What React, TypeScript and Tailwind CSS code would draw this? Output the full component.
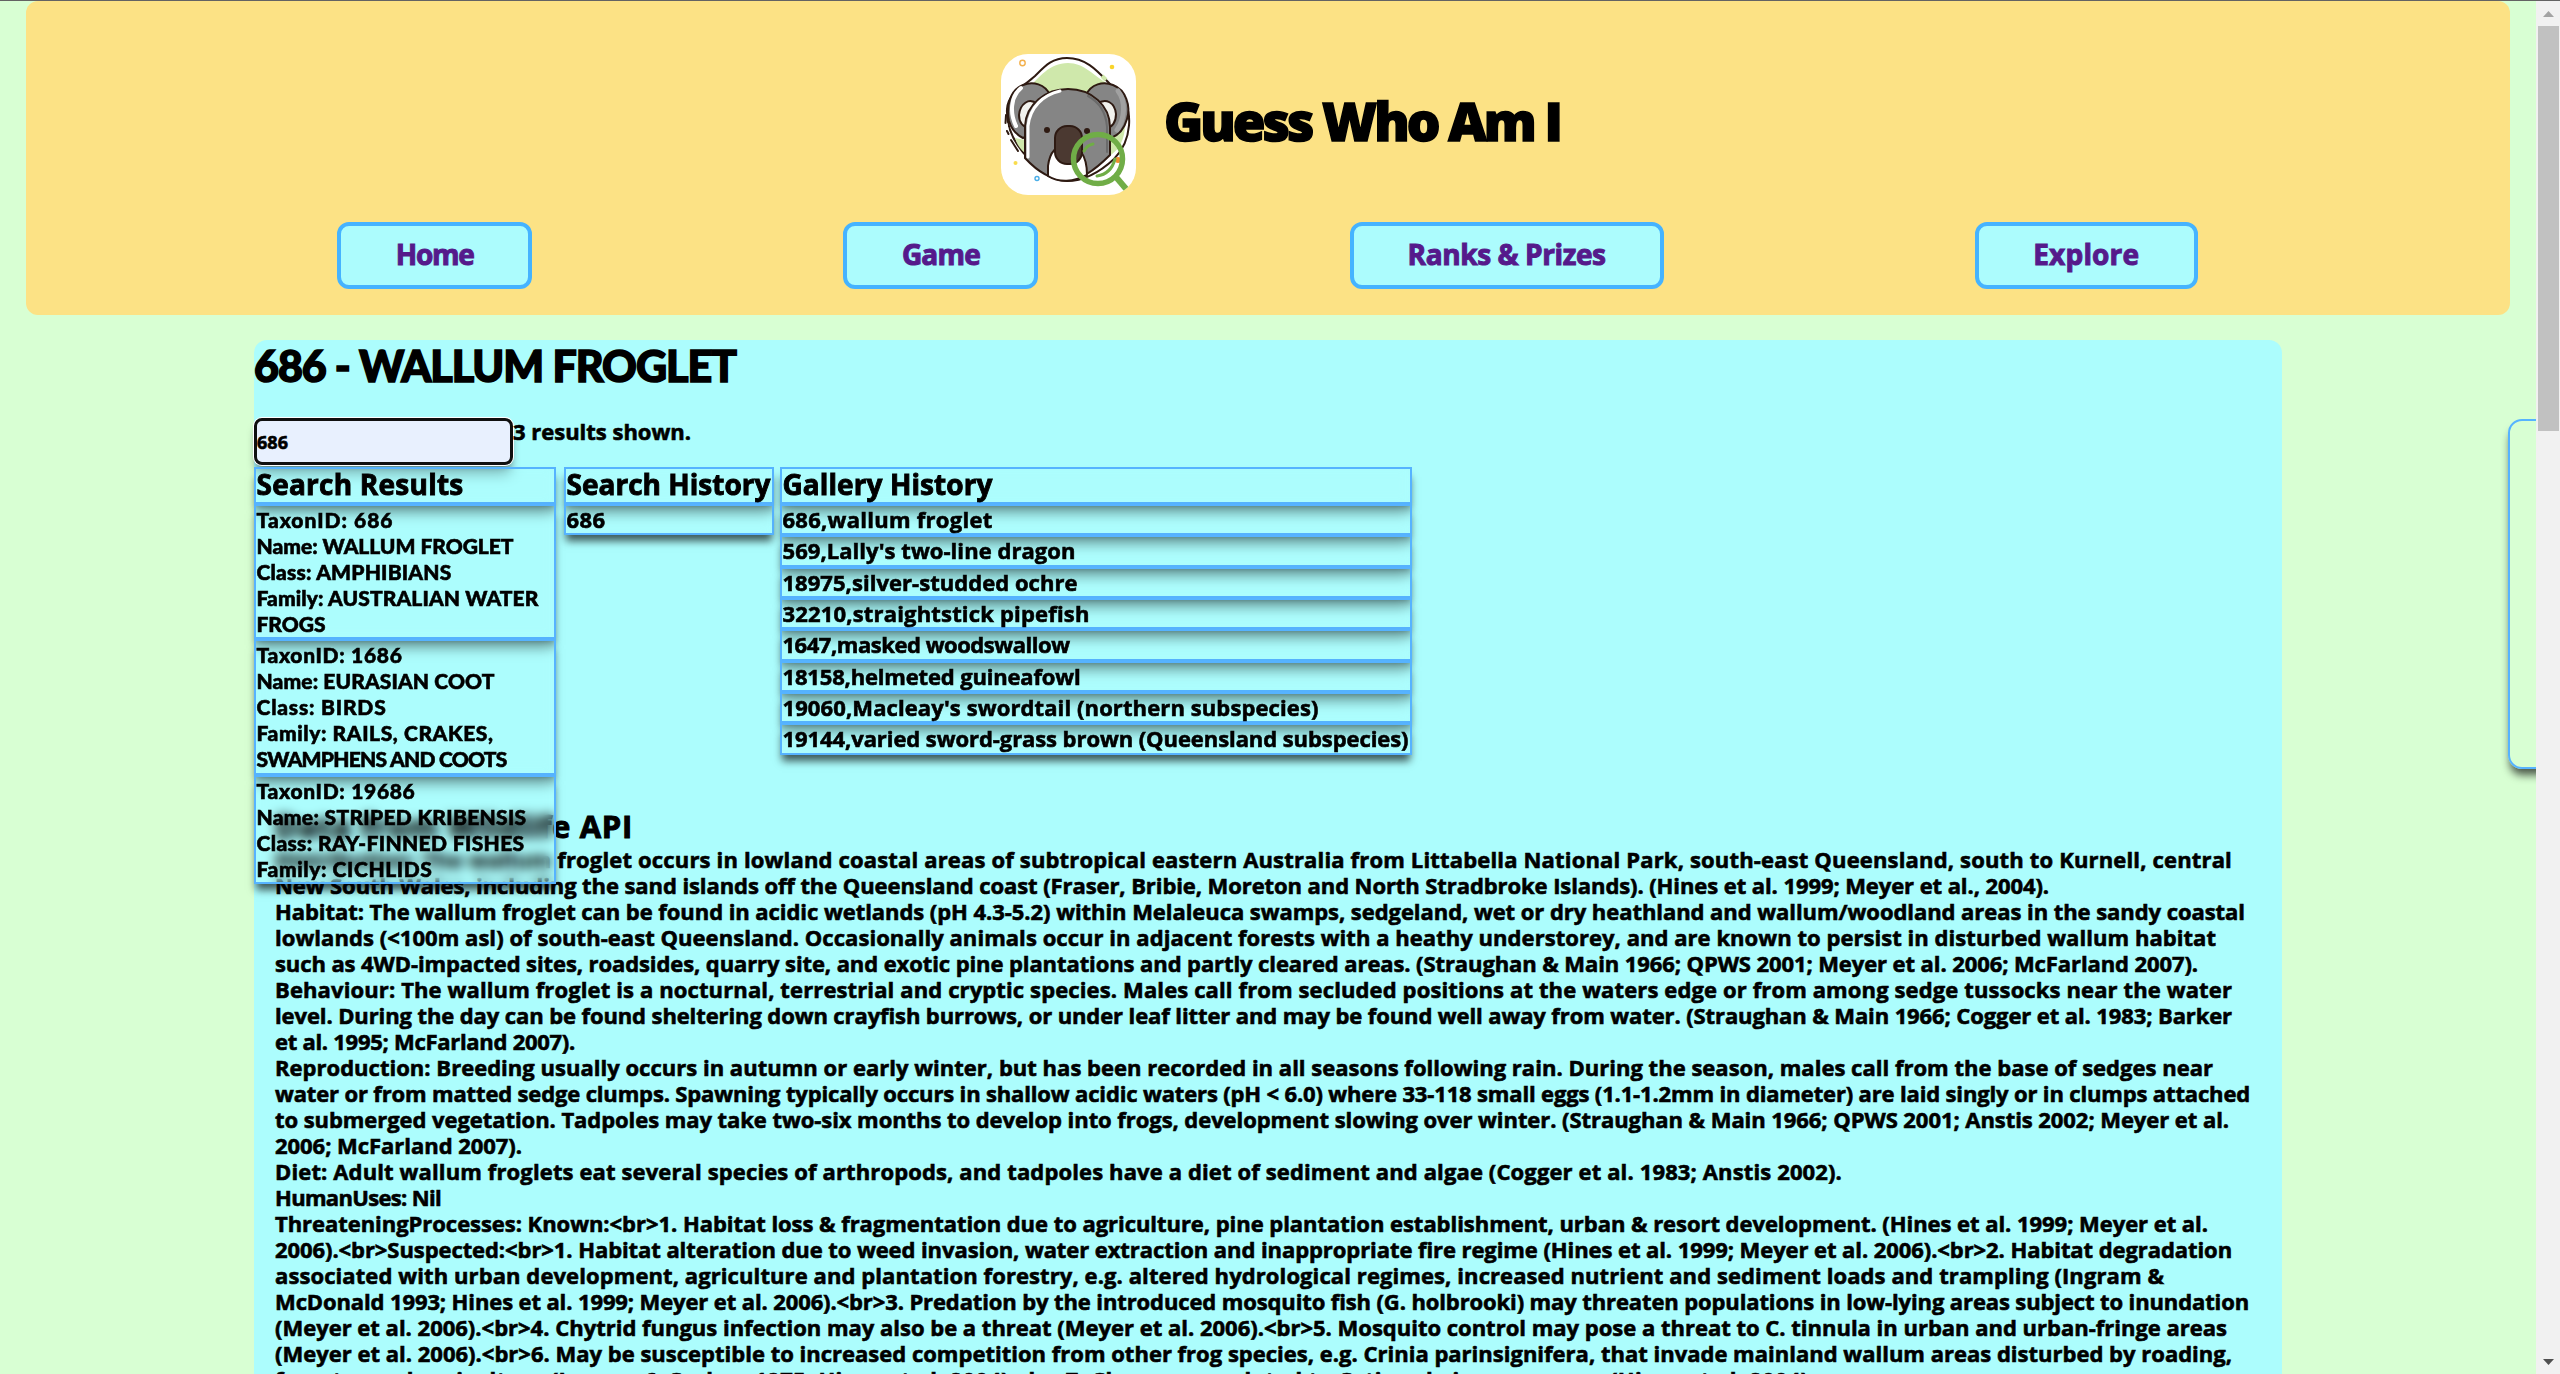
import { useLayoutEffect, useRef, useState } from "react";

/** Single line of text whose tracking is adjusted to fill the given width. */
function Line({ text, w }: { text: string; w: number }) {
  const ref = useRef<HTMLSpanElement>(null);
  const [spacing, setSpacing] = useState(0);
  useLayoutEffect(() => {
    if (!ref.current) return;
    const natural = ref.current.getBoundingClientRect().width;
    setSpacing((w - natural) / text.length);
  }, [text, w]);
  return (
    <span ref={ref} className="inline-block whitespace-pre" style={{ letterSpacing: `${spacing}px` }}>
      {text}
    </span>
  );
}

type L = [string, number];

const nav: [string, number, string][] = [
  ["Home", 78, "w-[195px]"],
  ["Game", 78, "w-[195px]"],
  ["Ranks & Prizes", 198, "w-[314px]"],
  ["Explore", 106, "w-[223px]"],
];

const results: L[][] = [
  [["TaxonID: 686", 137], ["Name: WALLUM FROGLET", 257], ["Class: AMPHIBIANS", 195], ["Family: AUSTRALIAN WATER", 282], ["FROGS", 69]],
  [["TaxonID: 1686", 146], ["Name: EURASIAN COOT", 238], ["Class: BIRDS", 130], ["Family: RAILS, CRAKES,", 237], ["SWAMPHENS AND COOTS", 250]],
  [["TaxonID: 19686", 159], ["Name: STRIPED KRIBENSIS", 270], ["Class: RAY-FINNED FISHES", 268], ["Family: CICHLIDS", 176]],
];

const gallery: L[][] = [
  [["686,wallum froglet", 210]],
  [["569,Lally's two-line dragon", 293]],
  [["18975,silver-studded ochre", 295]],
  [["32210,straightstick pipefish", 307]],
  [["1647,masked woodswallow", 287]],
  [["18158,helmeted guineafowl", 298]],
  [["19060,Macleay's swordtail (northern subspecies)", 536]],
  [["19144,varied sword-grass brown (Queensland subspecies)", 626]],
];

const article: L[] = [
  ["Distribution: The wallum froglet occurs in lowland coastal areas of subtropical eastern Australia from Littabella National Park, south-east Queensland, south to Kurnell, central", 1957],
  ["New South Wales, including the sand islands off the Queensland coast (Fraser, Bribie, Moreton and North Stradbroke Islands). (Hines et al. 1999; Meyer et al., 2004).", 1774],
  ["Habitat: The wallum froglet can be found in acidic wetlands (pH 4.3-5.2) within Melaleuca swamps, sedgeland, wet or dry heathland and wallum/woodland areas in the sandy coastal", 1970],
  ["lowlands (<100m asl) of south-east Queensland. Occasionally animals occur in adjacent forests with a heathy understorey, and are known to persist in disturbed wallum habitat", 1941],
  ["such as 4WD-impacted sites, roadsides, quarry site, and exotic pine plantations and partly cleared areas. (Straughan & Main 1966; QPWS 2001; Meyer et al. 2006; McFarland 2007).", 1923],
  ["Behaviour: The wallum froglet is a nocturnal, terrestrial and cryptic species. Males call from secluded positions at the waters edge or from among sedge tussocks near the water", 1957],
  ["level. During the day can be found sheltering down crayfish burrows, or under leaf litter and may be found well away from water. (Straughan & Main 1966; Cogger et al. 1983; Barker", 1957],
  ["et al. 1995; McFarland 2007).", 300],
  ["Reproduction: Breeding usually occurs in autumn or early winter, but has been recorded in all seasons following rain. During the season, males call from the base of sedges near", 1938],
  ["water or from matted sedge clumps. Spawning typically occurs in shallow acidic waters (pH < 6.0) where 33-118 small eggs (1.1-1.2mm in diameter) are laid singly or in clumps attached", 1975],
  ["to submerged vegetation. Tadpoles may take two-six months to develop into frogs, development slowing over winter. (Straughan & Main 1966; QPWS 2001; Anstis 2002; Meyer et al.", 1954],
  ["2006; McFarland 2007).", 247],
  ["Diet: Adult wallum froglets eat several species of arthropods, and tadpoles have a diet of sediment and algae (Cogger et al. 1983; Anstis 2002).", 1567],
  ["HumanUses: Nil", 166],
  ["ThreateningProcesses: Known:<br>1. Habitat loss & fragmentation due to agriculture, pine plantation establishment, urban & resort development. (Hines et al. 1999; Meyer et al.", 1933],
  ["2006).<br>Suspected:<br>1. Habitat alteration due to weed invasion, water extraction and inappropriate fire regime (Hines et al. 1999; Meyer et al. 2006).<br>2. Habitat degradation", 1957],
  ["associated with urban development, agriculture and plantation forestry, e.g. altered hydrological regimes, increased nutrient and sediment loads and trampling (Ingram &", 1889],
  ["McDonald 1993; Hines et al. 1999; Meyer et al. 2006).<br>3. Predation by the introduced mosquito fish (G. holbrooki) may threaten populations in low-lying areas subject to inundation", 1974],
  ["(Meyer et al. 2006).<br>4. Chytrid fungus infection may also be a threat (Meyer et al. 2006).<br>5. Mosquito control may pose a threat to C. tinnula in urban and urban-fringe areas", 1952],
  ["(Meyer et al. 2006).<br>6. May be susceptible to increased competition from other frog species, e.g. Crinia parinsignifera, that invade mainland wallum areas disturbed by roading,", 1957],
  ["forestry and agriculture (Ingram & Corben 1975; Hines et al. 2004).<br>7. Changes unrelated to C. tinnula in open areas (Hines et al. 2004).", 1540],
];

function Card({ title, titleW, items, width }: { title: string; titleW: number; items: L[][]; width: string }) {
  const box = "border-2 border-[#56b3ff] pl-[0.5px] shadow-[0_8px_8px_-2px_rgba(0,0,0,0.65)] backdrop-blur-[6px]";
  return (
    <div className={width}>
      <h3 className={`${box} h-[37px] text-[28px] leading-[31px]`}>
        <Line text={title} w={titleW} />
      </h3>
      {items.map((lines, i) => (
        <div key={i} className={`${box} pb-[1.35px]`}>
          {lines.map(([t, w]) => (
            <p key={t} className="h-[26px]">
              <Line text={t} w={w} />
            </p>
          ))}
        </div>
      ))}
    </div>
  );
}

function Koala() {
  return (
    <svg viewBox="0 0 135 141" className="h-[141px] w-[135px] shrink-0 rounded-[27px] bg-white" fill="none" strokeLinecap="round">
      <path d="M66 4C89 4 100 22 116 37C135 55 130 88 113 105C99 118 82 127 66 127C51 127 39 116 29 106C14 91 5 74 6 55C7 39 22 33 34 22C44 12 51 4 66 4Z" fill="#fff" stroke="#2e1a12" strokeWidth="2" />
      <path d="M67 9C48 9 38 24 28 33L35 80L105 80L107 30C92 21 83 9 67 9Z" fill="#cfe8ab" />
      <path d="M14 84L24 86V99C20 96 16 91 14 84ZM124 70C124 86 118 95 110 101V82Z" fill="#cfe8ab" />
      <path d="M101 22L105 26" stroke="#cfe8ab" strokeWidth="4" strokeLinecap="butt" />
      <path d="M4 70L8 91" stroke="#fff" strokeWidth="5" />
      <path d="M5 61L4.500 69M6 77L7.500 80M10 86L17 97" stroke="#2e1a12" strokeWidth="2" />
      <path d="M49 41C44 30 32 27 22 31C9 36 5 52 8 67C11 77 16 81 22 84L44 70Z" fill="#858585" stroke="#2e1a12" strokeWidth="2" />
      <path d="M20 34C9 43 9 60 15 72" stroke="#fff" strokeWidth="4" />
      <path d="M85 41C90 30 102 27 112 31C125 36 130 52 126 65C123 76 118 81 110 84L92 70Z" fill="#858585" stroke="#2e1a12" strokeWidth="2" />
      <path d="M117 37C125 47 124 65 116 76" stroke="#a1a1a1" strokeWidth="5" />
      <path d="M36 50C28 43 19 50 18 61C18 68 22 74 28 73ZM96 50C105 43 114 49 115 60C115 68 111 74 106 73Z" fill="#f1f1ed" stroke="#2e1a12" strokeWidth="2" />
      <path d="M24 104V72C25 50 45 35 67 35C91 35 109 52 109 73V101C92 118 79 126 65 126C48 126 35 116 24 104Z" fill="#858585" stroke="#2e1a12" strokeWidth="2" />
      <path d="M27 103V72C29 53 42 41 59 37" stroke="#fff" strokeWidth="3" />
      <path d="M106 98V73C105 59 98 48 87 42" stroke="#6b6b6b" strokeWidth="2" />
      <path d="M47 122V112C49 96 57 91 66 91C78 91 86 101 86 121C73 128 58 129 47 122Z" fill="#fff" stroke="#2e1a12" strokeWidth="2" />
      <rect x="54" y="72" width="27" height="38" rx="12" fill="#4b3931" stroke="#2e1a12" strokeWidth="2" />
      <circle cx="46" cy="76" r="3" fill="#2e1a12" />
      <circle cx="86" cy="77" r="3" fill="#2e1a12" />
      <circle cx="117" cy="106" r="3" fill="#ef8c2e" />
      <circle cx="97" cy="105" r="24.500" stroke="#70ad47" strokeWidth="5.500" />
      <path d="M83 97Q86 91 92 90M96 122Q110 120 114 105" stroke="#70ad47" strokeWidth="3" />
      <path d="M115 123L126 136" stroke="#70ad47" strokeWidth="6" strokeLinecap="butt" />
      <circle cx="21.500" cy="9" r="2.700" stroke="#f3b04c" strokeWidth="1.400" />
      <circle cx="111" cy="13" r="2.300" fill="#f9d42b" />
      <circle cx="14.500" cy="109" r="2" fill="#f9dc4c" />
      <circle cx="36" cy="124.500" r="2" stroke="#4aaee8" strokeWidth="1.400" />
    </svg>
  );
}

export default function App() {
  return (
    <div className="flex h-[1374px] w-[2560px] overflow-hidden border-t border-[#636363] bg-[#d8ffd3] font-['Open_Sans','Noto_Sans',sans-serif] text-[22px] leading-[26px] font-bold text-black [-webkit-text-stroke:0.6px_currentColor]">
      <div className="relative w-[2536px] shrink-0 overflow-hidden">
        <header className="ml-[26px] h-[314px] w-[2484px] rounded-[12px] bg-[#fce285] pt-[53px]">
          <div className="flex h-[141px] items-center justify-center gap-[28px] pl-[25px]">
            <Koala />
            <h1 className="-mt-[8px] text-[53px] leading-[64px] font-extrabold [-webkit-text-stroke:1.5px_currentColor]">
              <Line text="Guess Who Am I" w={396} />
            </h1>
          </div>
          <nav className="mt-[27px] flex justify-evenly pr-px">
            {nav.map(([label, w, cls]) => (
              <a key={label} className={`${cls} flex h-[67px] items-center justify-center rounded-[12px] border-4 border-[#45b3ff] bg-[#acfcfd] pb-[3px] text-[28px] text-[#551a8b] [-webkit-text-stroke:1px_currentColor]`}>
                <Line text={label} w={w} />
              </a>
            ))}
          </nav>
        </header>

        <main className="mt-[25px] ml-[254px] h-[1100px] w-[2028px] rounded-t-[13px] bg-[#acfdfd]">
          <h2 className="h-[78px] font-['Lato',sans-serif] text-[43px] leading-[52px] font-black [-webkit-text-stroke:1.5px_currentColor]">
            <Line text="686 - WALLUM FROGLET" w={482} />
          </h2>
          <div className="flex h-[49px]">
            <div className="h-[47px] w-[259px] rounded-[8px] border-[3px] border-[#101010] bg-[#e8f0fe] pt-[8px] text-[18px] shadow-[0_8px_8px_-2px_rgba(0,0,0,0.5)] ring-1 ring-white">
              <Line text="686" w={31} />
            </div>
            <p>
              <Line text="3 results shown." w={178} />
            </p>
          </div>
          <div className="relative z-10 flex h-[339px] items-start [&_h3]:[-webkit-text-stroke:0.9px_currentColor]">
            <div className="[&_p]:relative [&_p]:top-px [&_p]:font-['Lato',sans-serif] [&_p]:text-[21px] [&_p]:font-black">
              <Card title="Search Results" titleW={207} items={results} width="w-[302px]" />
            </div>
            <div className="w-[8px]" />
            <Card title="Search History" titleW={204} items={[[["686", 39]]]} width="w-[210px]" />
            <div className="w-[6px]" />
            <Card title="Gallery History" titleW={210} items={gallery} width="w-[632px]" />
          </div>
          <article className="pl-[21px]">
            <h3 className="h-[39.5px] text-[31px] leading-[40px] [-webkit-text-stroke:1px_currentColor]">
              <Line text="Data from Wildlife API" w={358} />
            </h3>
            {article.map(([t, w]) => (
              <p key={t} className="h-[26px]">
                <Line text={t} w={w} />
              </p>
            ))}
          </article>
        </main>

        <aside className="absolute top-[418px] left-[2508px] h-[350px] w-[300px] rounded-[14px] border-2 border-[#56b3ff] shadow-[0_8px_8px_-2px_rgba(0,0,0,0.65)]" />
      </div>

      <div className="flex w-[24px] flex-col items-center justify-between bg-[#f1f1f1]">
        <div className="flex flex-col items-center">
          <svg viewBox="0 0 11 6" className="mt-[10px] mb-[9px] h-[6px] w-[11px]"><path d="M5.500 0L11 6H0Z" fill="#a3a3a3" /></svg>
          <div className="h-[405px] w-[21px] bg-[#c1c1c1]" />
        </div>
        <svg viewBox="0 0 11 6" className="mb-[9px] h-[6px] w-[11px]"><path d="M0 0H11L5.500 6Z" fill="#505050" /></svg>
      </div>
    </div>
  );
}
